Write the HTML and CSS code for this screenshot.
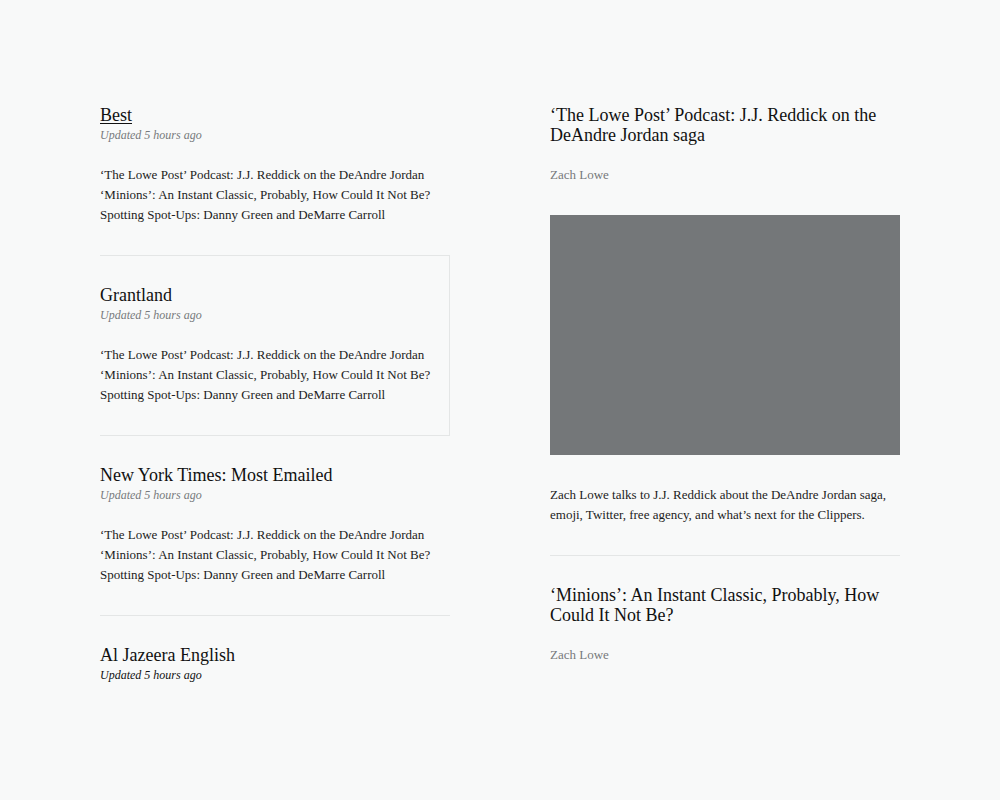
FILE: index.html
```html
<!DOCTYPE html>
<html lang="en">
<head>
<meta charset="utf-8">
<title>Feeds</title>
<link rel="stylesheet" href="styles.css">
</head>
<body>
<div class="page">
  <div class="feeds">
    <div class="feed">
      <a class="feed-title link" href="#">Best</a>
      <div class="meta">Updated 5 hours ago</div>
      <ul class="headlines">
        <li>‘The Lowe Post’ Podcast: J.J. Reddick on the DeAndre Jordan</li>
        <li>‘Minions’: An Instant Classic, Probably, How Could It Not Be?</li>
        <li>Spotting Spot-Ups: Danny Green and DeMarre Carroll</li>
      </ul>
    </div>
    <div class="feed active">
      <div class="feed-title">Grantland</div>
      <div class="meta">Updated 5 hours ago</div>
      <ul class="headlines">
        <li>‘The Lowe Post’ Podcast: J.J. Reddick on the DeAndre Jordan</li>
        <li>‘Minions’: An Instant Classic, Probably, How Could It Not Be?</li>
        <li>Spotting Spot-Ups: Danny Green and DeMarre Carroll</li>
      </ul>
    </div>
    <div class="feed">
      <div class="feed-title">New York Times: Most Emailed</div>
      <div class="meta">Updated 5 hours ago</div>
      <ul class="headlines">
        <li>‘The Lowe Post’ Podcast: J.J. Reddick on the DeAndre Jordan</li>
        <li>‘Minions’: An Instant Classic, Probably, How Could It Not Be?</li>
        <li>Spotting Spot-Ups: Danny Green and DeMarre Carroll</li>
      </ul>
    </div>
    <div class="feed last">
      <div class="feed-title">Al Jazeera English</div>
      <div class="meta dark">Updated 5 hours ago</div>
    </div>
  </div>
  <div class="articles">
    <article class="article">
      <h2 class="article-title">‘The Lowe Post’ Podcast: J.J. Reddick on the DeAndre Jordan saga</h2>
      <div class="author">Zach Lowe</div>
      <div class="image"></div>
      <p class="summary">Zach Lowe talks to J.J. Reddick about the DeAndre Jordan saga, emoji, Twitter, free agency, and what’s next for the Clippers.</p>
    </article>
    <article class="article last">
      <h2 class="article-title">‘Minions’: An Instant Classic, Probably, How Could It Not Be?</h2>
      <div class="author">Zach Lowe</div>
    </article>
  </div>
</div>
</body>
</html>
```
FILE: styles.css
```css
html, body {
  margin: 0;
  padding: 0;
  background: #f8f9f9;
}
body {
  font-family: "Liberation Serif", "DejaVu Serif", serif;
  color: #1a1a1a;
}
.page {
  width: 800px;
  margin: 0 auto;
  padding-top: 76px;
  display: flex;
  gap: 100px;
}
.feeds, .articles {
  width: 350px;
  flex: none;
}
.feed {
  padding: 29px 0 30px;
  border-bottom: 1px solid #e4e6e6;
}
.feed.active {
  border-top: 1px solid #e4e6e6;
  border-right: 1px solid #e4e6e6;
  margin-top: -1px;
}
.feed.last {
  border-bottom: none;
}
.feed-title {
  display: block;
  font-size: 18px;
  line-height: 20px;
  color: #111;
  text-decoration: none;
}
.feed-title.link {
  display: inline-block;
  text-decoration: underline;
  text-underline-offset: 2px;
  text-decoration-thickness: 1px;
}
.meta {
  font-size: 12px;
  line-height: 20px;
  font-style: italic;
  color: #777a7c;
}
.meta.dark {
  color: #111;
}
.headlines {
  list-style: none;
  margin: 20px 0 0;
  padding: 0;
  font-size: 13px;
  line-height: 20px;
  color: #1c1c1c;
}
.article {
  padding: 29px 0 30px;
  border-bottom: 1px solid #e4e6e6;
}
.article.last {
  border-bottom: none;
}
.article-title {
  margin: 0;
  font-weight: normal;
  font-size: 18px;
  line-height: 20px;
  color: #111;
}
.author {
  margin-top: 20px;
  font-size: 13px;
  line-height: 20px;
  color: #777a7c;
}
.image {
  margin-top: 30px;
  height: 240px;
  background: #747779;
}
.summary {
  margin: 30px 0 0;
  font-size: 13px;
  line-height: 20px;
  color: #1c1c1c;
}
```
